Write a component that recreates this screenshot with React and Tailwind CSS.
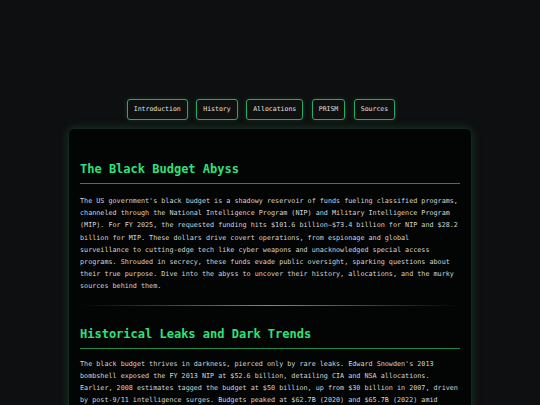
import React from 'react';

const NAV = ['Introduction', 'History', 'Allocations', 'PRISM', 'Sources'];

const mono = "font-['DejaVu_Sans_Mono','Liberation_Mono',monospace]";

export default function App() {
  return (
    <div className={`min-h-screen h-[405px] overflow-hidden bg-[#0e0f10] antialiased ${mono}`}>
      <div className="w-[404px] mx-auto pt-[99px]">
        {/* Nav */}
        <nav className="flex justify-center gap-[8.5px] pr-[18px]">
          {NAV.map(n => (
            <a
              key={n}
              className="h-[21px] px-[6px] flex items-center border border-[#2aa864] rounded-[3px] bg-[#0f1110] text-[#e0e0e0] text-[6.5px] shadow-[0_0_4px_rgba(42,168,100,0.25)]"
            >
              {n}
            </a>
          ))}
        </nav>

        {/* Card */}
        <main className="mt-[8px] bg-[#030404] border border-[#13271c] rounded-[6px] shadow-[0_0_10px_rgba(34,160,90,0.28)] px-[11px] pt-[20px] pb-8">
          <section>
            <h1 className="text-[12px] leading-[16px] font-bold text-[#30e07c] pb-[6px] border-b border-[#1f8a4c] mt-[12px]">
              The Black Budget Abyss
            </h1>
            <p className="mt-[11px] text-[6.75px] leading-[12.2px] text-[#d4d4d4]">
              The US government's black budget is a shadowy reservoir of funds fueling classified programs, channeled through the National Intelligence Program (NIP) and Military Intelligence Program (MIP). For FY 2025, the requested funding hits $101.6 billion—$73.4 billion for NIP and $28.2 billion for MIP. These dollars drive covert operations, from espionage and global surveillance to cutting-edge tech like cyber weapons and unacknowledged special access programs. Shrouded in secrecy, these funds evade public oversight, sparking questions about their true purpose. Dive into the abyss to uncover their history, allocations, and the murky sources behind them.
            </p>
          </section>

          <div className="mt-[12px] h-px bg-gradient-to-r from-transparent via-[#33b566] to-transparent" />

          <section>
            <h2 className="mt-[20px] text-[12px] leading-[16px] font-bold text-[#30e07c] pb-[6px] border-b border-[#1f8a4c]">
              Historical Leaks and Dark Trends
            </h2>
            <p className="mt-[9px] text-[6.75px] leading-[12.2px] text-[#d4d4d4]">
              The black budget thrives in darkness, pierced only by rare leaks. Edward Snowden's 2013 bombshell exposed the FY 2013 NIP at $52.6 billion, detailing CIA and NSA allocations. Earlier, 2008 estimates tagged the budget at $50 billion, up from $30 billion in 2007, driven by post-9/11 intelligence surges. Budgets peaked at $62.7B (2020) and $65.7B (2022) amid rising global tensions, each figure a rare glimpse into a system built to stay hidden.
            </p>
          </section>
        </main>
      </div>
    </div>
  );
}
